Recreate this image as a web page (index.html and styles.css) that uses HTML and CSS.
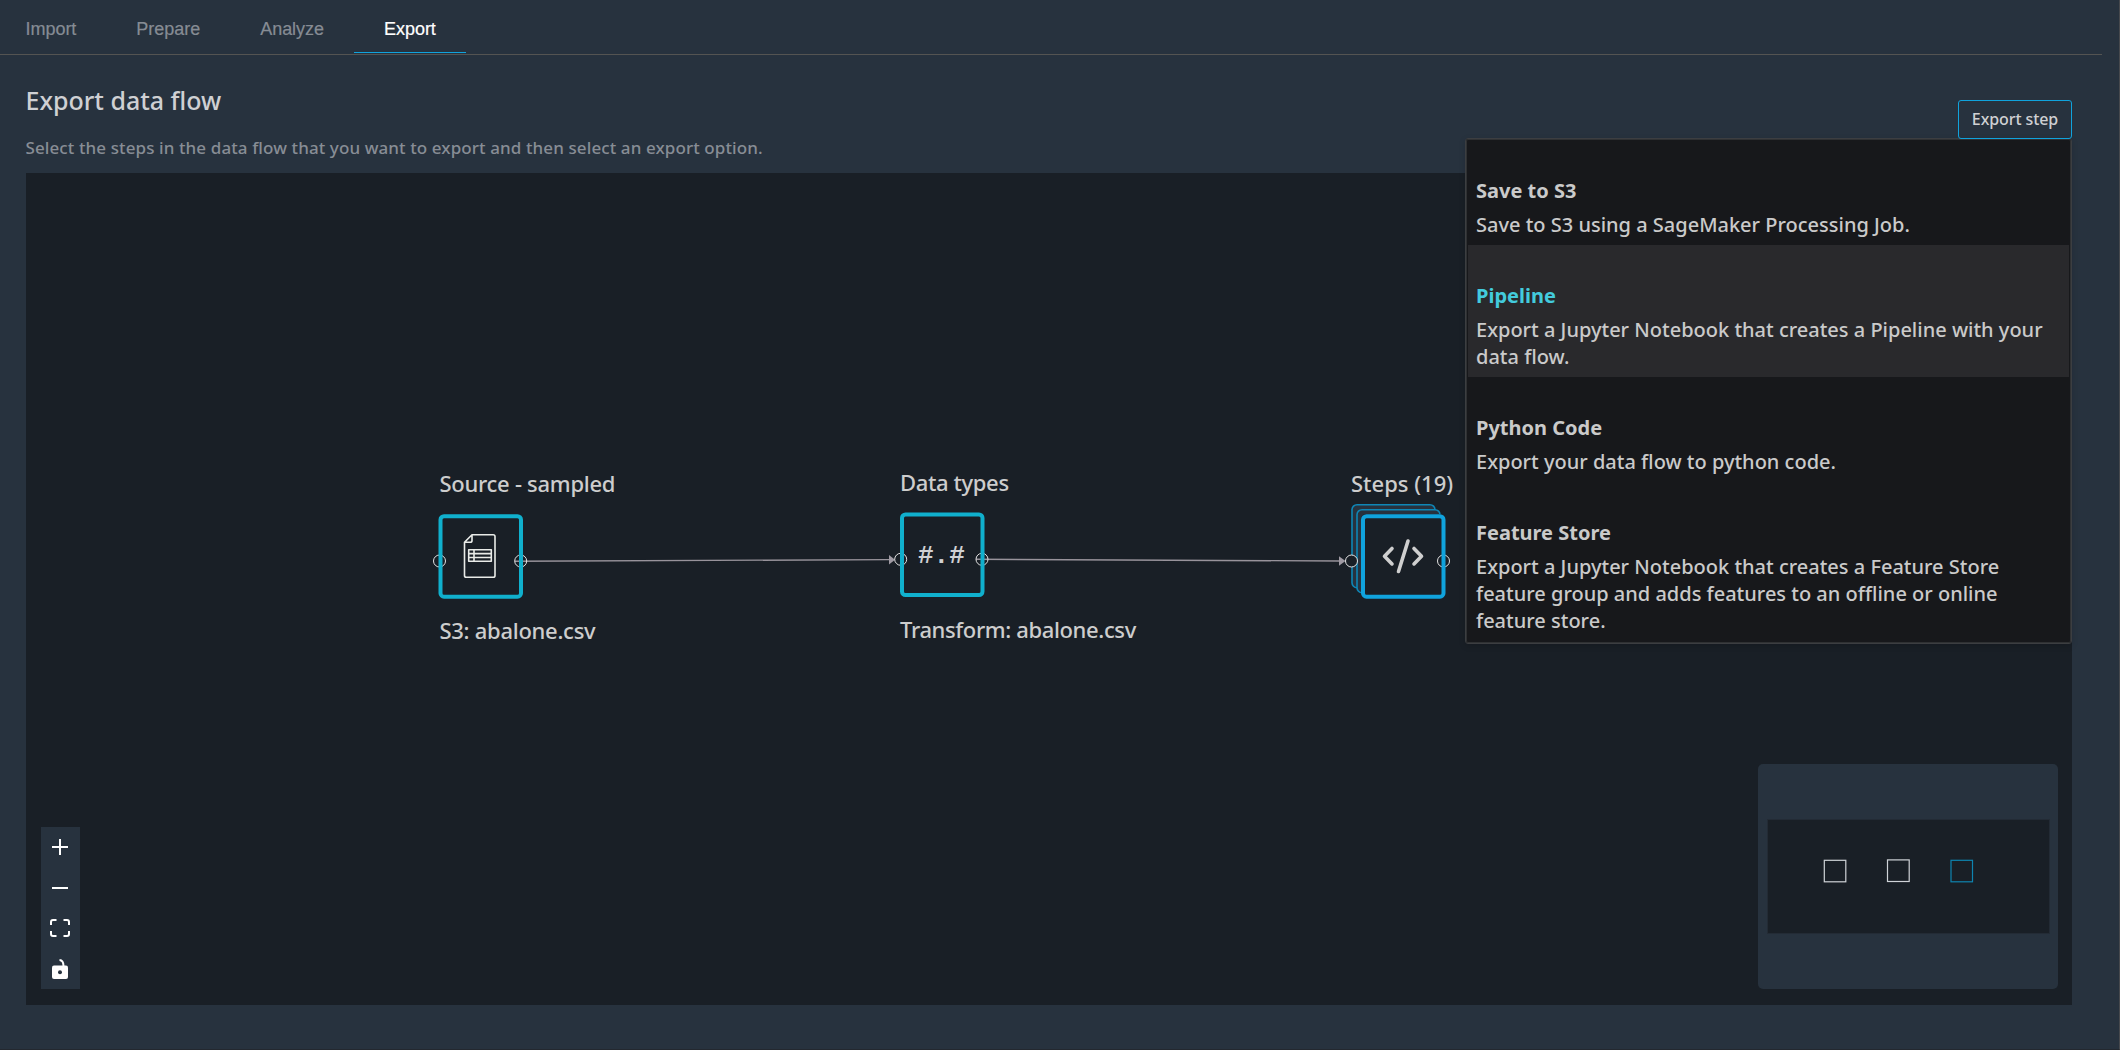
FILE: index.html
```
<!DOCTYPE html>
<html lang="en">
<head>
<meta charset="utf-8">
<title>Export data flow</title>
<link rel="stylesheet" href="styles.css">
</head>
<body>
<div class="app">
  <nav class="tabs">
    <a class="tab">Import</a>
    <a class="tab">Prepare</a>
    <a class="tab">Analyze</a>
    <a class="tab active">Export</a>
  </nav>
  <main class="page">
    <header class="page-head">
      <div class="titles">
        <h1>Export data flow</h1>
        <p>Select the steps in the data flow that you want to export and then select an export option.</p>
      </div>
      <div class="export">
        <button class="export-btn">Export step</button>
        <ul class="menu">
          <li class="item"><h2>Save to S3</h2><p>Save to S3 using a SageMaker Processing Job.</p></li>
          <li class="item selected"><h2>Pipeline</h2><p>Export a Jupyter Notebook that creates a Pipeline with your data flow.</p></li>
          <li class="item"><h2>Python Code</h2><p>Export your data flow to python code.</p></li>
          <li class="item"><h2>Feature Store</h2><p>Export a Jupyter Notebook that creates a Feature Store feature group and adds features to an offline or online feature store.</p></li>
        </ul>
      </div>
    </header>
    <section class="canvas">
      <svg class="graph" viewBox="26 173 2046 832" width="2046" height="832">
        <g class="edge">
          <path d="M515 561.3L889 559.6"/>
          <path d="M976 559.3L1340 561"/>
        </g>
        <g class="arrow">
          <path d="M889 555v9.600l6-4.800z"/>
          <path d="M1339 556.200v9.600l6.500-4.800z"/>
        </g>
        <g class="stack">
          <rect x="1352" y="504.700" width="83" height="83" rx="5"/>
          <rect x="1357" y="509.700" width="83" height="83" rx="5"/>
        </g>
        <rect class="fill" x="1361" y="514" width="84" height="84" rx="5"/>
        <g class="handle">
          <circle cx="439.500" cy="561" r="6"/>
          <circle cx="520.700" cy="561" r="6"/>
          <circle cx="900.700" cy="559.300" r="6"/>
          <circle cx="982" cy="559.300" r="6"/>
          <circle cx="1443.500" cy="561" r="6"/>
          <circle class="solid" cx="1351.500" cy="561" r="6"/>
        </g>
        <rect class="box" x="440.500" y="516.200" width="80.500" height="80.500" rx="3.500"/>
        <rect class="box" x="902" y="514.500" width="80.500" height="80.500" rx="3.500"/>
        <rect class="box blue" x="1363" y="516.200" width="80.500" height="80.500" rx="3.500"/>
        <g class="doc">
          <path d="M472 534.800h21.200q1.800 0 1.800 1.800v38.800q0 1.800-1.800 1.800h-26.900q-1.800 0-1.800-1.800v-33.100zM472 534.800v5.700q0 1.800-1.800 1.800h-5.700"/>
          <path d="M468.700 549.700h22.600v11.600h-22.600zM474 549.700v11.600M468.700 553.600h22.600M468.700 557.500h22.600"/>
        </g>
        <text class="types" x="918" y="563">#.#</text>
        <path class="code" d="M1392 548.500l-7.500 7.700 7.500 7.700M1414 548.500l7.500 7.700-7.500 7.700M1408 541l-9.500 30.500"/>
      </svg>
      <div class="node source"><span>Source - sampled</span><span>S3: abalone.csv</span></div>
      <div class="node types-node"><span>Data types</span><span>Transform: abalone.csv</span></div>
      <div class="node steps"><span>Steps (19)</span></div>
      <div class="controls">
        <button><svg width="20" height="20" viewBox="0 0 20 20"><path d="M2 10h16M10 2v16"/></svg></button>
        <button><svg width="20" height="20" viewBox="0 0 20 20"><path d="M2 10h16"/></svg></button>
        <button><svg width="20" height="20" viewBox="0 0 20 20"><path d="M1 7V4q0-2 2-2h3.500M13.500 2H17q2 0 2 2v3M19 13v3q0 2-2 2h-3.500M6.500 18H3q-2 0-2-2v-3"/></svg></button>
        <button><svg width="20" height="20" viewBox="0 0 20 20"><path class="shackle" d="M9.500 1q4 .3 4 6"/><rect class="lock" x="2" y="6.500" width="16" height="13.500" rx="2"/><circle class="hole" cx="10" cy="13.300" r="2"/></svg></button>
      </div>
      <div class="minimap">
        <svg width="283" height="115" viewBox="0 0 283 115">
          <rect class="view" x=".5" y=".5" width="282" height="114"/>
          <rect class="mini" x="57.300" y="41.300" width="21.500" height="21.500"/>
          <rect class="mini" x="120.500" y="40.900" width="21.700" height="21.600"/>
          <rect class="mini on" x="184" y="41.300" width="21.500" height="21.500"/>
        </svg>
      </div>
    </section>
  </main>
</div>
</body>
</html>
```
FILE: styles.css
```
* { box-sizing: border-box; }
body { margin: 0; background: #27323e; font-family: "Noto Sans", sans-serif; font-weight: 500; color: #cfd0d3; }
h1, h2, p, ul { margin: 0; padding: 0; }
button { margin: 0; padding: 0; border: 0; background: none; color: inherit; font: inherit; }

.app { width: 2120px; height: 1050px; display: flex; flex-direction: column; border-right: 1px solid #47494d; border-bottom: 1px solid #23282f; overflow: hidden; }
.tabs { display: flex; height: 55px; width: 2102px; border-bottom: 1px solid #545452; }
.tab { height: 53px; padding: 19px 30px 0; font: 18px/20px "Liberation Sans", Arial, sans-serif; letter-spacing: -.03px; color: #868c94; -webkit-text-stroke: .2px; }
.tab:first-child { padding-left: 25.5px; }
.tab.active { color: #fff; border-bottom: 1px solid #10a3dd; }

.page { width: 2072px; padding-left: 26px; }
.page-head { display: flex; justify-content: space-between; height: 118px; }
.titles { padding-top: 28px; margin-left: -.5px; }
h1 { font-size: 25px; line-height: 34px; font-weight: 500; }
.titles p { margin-top: 19px; font-size: 17px; line-height: 24px; color: #878d95; letter-spacing: .1px; }

.export { position: relative; padding-top: 45px; }
.export-btn { position: relative; z-index: 3; display: block; width: 114px; height: 39px; border: 1px solid #10a3dd; border-radius: 3px; font-size: 16px; line-height: 37px; letter-spacing: -.1px; }
.menu { position: absolute; z-index: 2; top: 83px; right: 0; width: 607px; padding: 1px 1px 2px; border: 1px solid #3c3e41; outline: 1px solid #2f3133; outline-offset: -2px; border-radius: 3px; background: #17181b; list-style: none; box-shadow: 0 2px 6px rgba(0,0,0,.15); }
.item { margin: 0 1px; padding: 37px 7px 7px 8px; font-size: 20px; line-height: 27px; color: #cacaca; }
.item h2 { margin-bottom: 7px; font-size: 20px; line-height: 27px; font-weight: 700; }
.item.selected { background: #29292c; }
.item.selected h2 { color: #43cbdd; }

.canvas { position: relative; width: 2046px; height: 832px; background: #191f26; }
.graph { display: block; }
.edge { stroke: #98939b; stroke-width: 1.4; }
.arrow { fill: #a09ba4; }
.stack { fill: #27323e; stroke: #0e86b6; stroke-width: 1.6; }
.fill { fill: #191f26; }
.handle { fill: none; stroke: #e4e4e4; stroke-width: 1; }
.handle .solid { fill: #191f26; }
.box { fill: none; stroke: #10b0cd; stroke-width: 4; }
.box.blue { stroke: #10a3dd; }
.doc { fill: none; stroke: #e9ebe8; stroke-width: 1.6; stroke-linejoin: round; }
.types { font: 700 26px "Liberation Mono", monospace; fill: #cfd0d3; }
.code { fill: none; stroke: #cfcfcf; stroke-width: 3.6; stroke-linecap: round; stroke-linejoin: round; }

.node { position: absolute; display: flex; flex-direction: column; gap: 117px; font-size: 22px; line-height: 30px; letter-spacing: -.28px; white-space: nowrap; color: #cdcdcd; }
.source { left: 413.5px; top: 295px; }
.types-node { left: 874px; top: 294px; letter-spacing: -.37px; }
.steps { left: 1325px; top: 295px; letter-spacing: 0; }

.controls { position: absolute; left: 15px; top: 654px; width: 39px; height: 162px; padding-right: 1px; display: flex; flex-direction: column; background: #27323e; }
.controls button { flex: 1; display: flex; align-items: center; justify-content: center; }
.controls svg { fill: none; stroke: #fff; stroke-width: 2; }
.controls .lock { fill: #fff; stroke: none; }
.controls .hole { fill: #27323e; stroke: none; }

.minimap { position: absolute; left: 1732px; top: 591px; width: 300px; height: 225px; display: flex; align-items: center; justify-content: center; background: #27323e; border-radius: 5px; }
.view { fill: #191f26; stroke: #232b35; }
.mini { fill: none; stroke: #cfd3d8; stroke-width: 1.2; }
.mini.on { stroke: #0e84b0; }
```
